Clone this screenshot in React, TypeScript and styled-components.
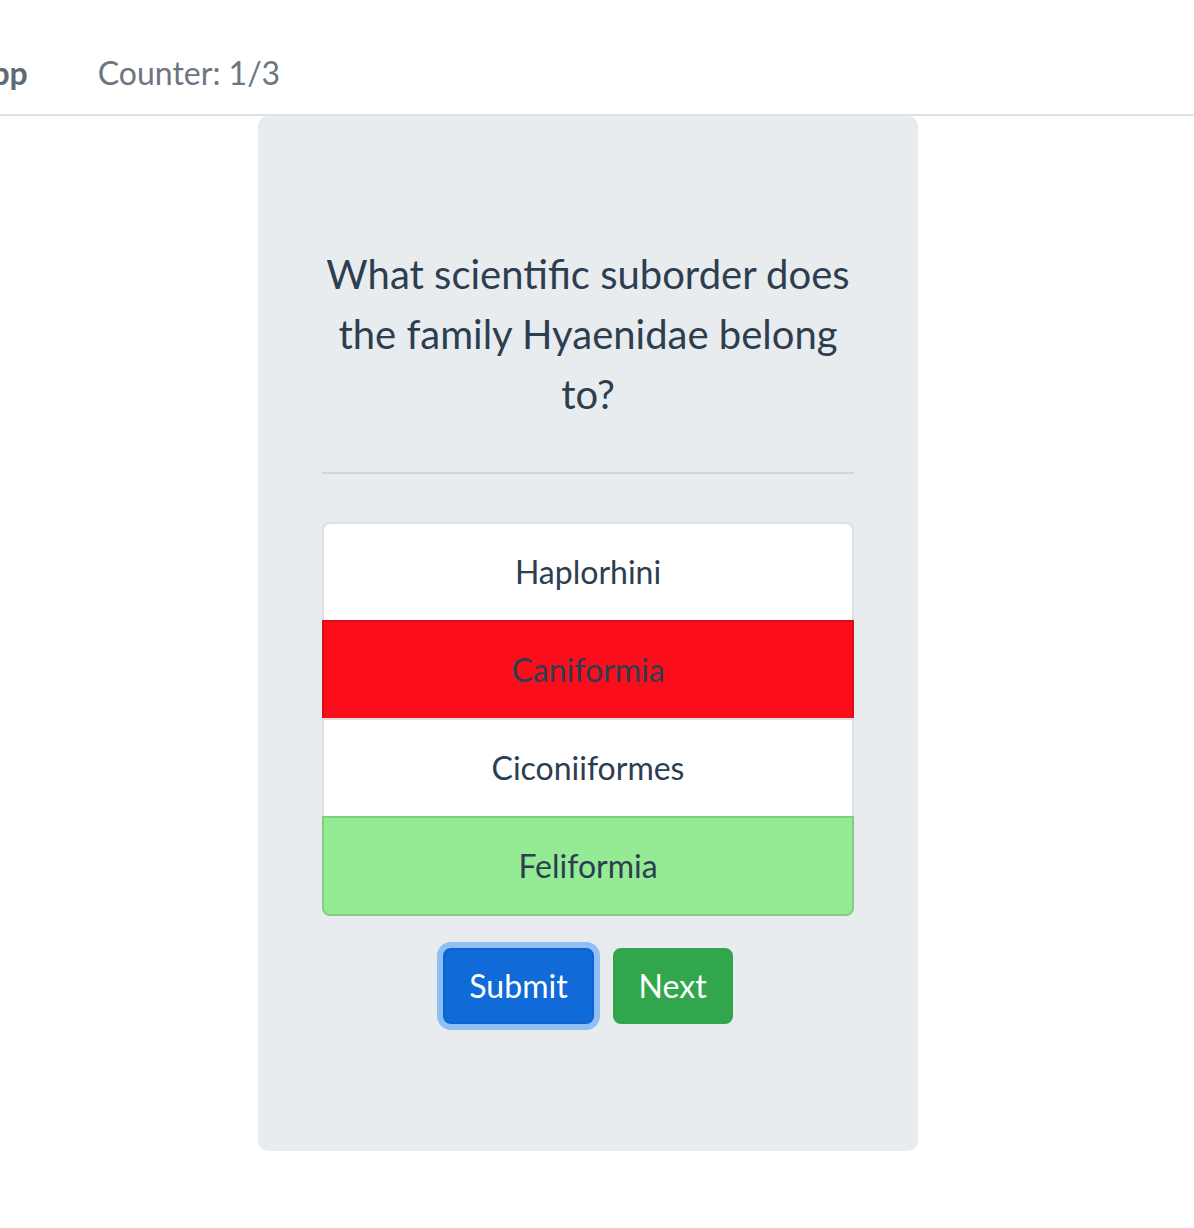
import React from "react";
import styled, { createGlobalStyle } from "styled-components";

const Global = createGlobalStyle`
  html, body { margin: 0; padding: 0; background: #fff; }
  body {
    font-family: Lato, "Open Sans", Helvetica, Arial, sans-serif;
    color: #2c3e50;
    overflow-x: hidden;
  }
  * { box-sizing: border-box; }
`;

const Navbar = styled.nav`
  display: flex;
  align-items: center;
  height: 116px;
  padding: 32px 32px 0;
  border-bottom: 2px solid #dfe2e5;
  overflow: hidden;
`;

const Brand = styled.span`
  font-size: 32px;
  line-height: 48px;
  font-weight: 700;
  color: #5f6a74;
  margin-left: -136px;
  margin-right: 70px;
  white-space: nowrap;
`;

const NavItem = styled.span`
  font-size: 32px;
  line-height: 48px;
  color: #6c7680;
  white-space: nowrap;
`;

const Card = styled.main`
  width: 660px;
  margin-left: 258px;
  padding: 128px 64px 127px;
  background: #e9ecef;
  border-radius: 10px;
  text-align: center;
`;

const Question = styled.p`
  margin: 0;
  font-size: 40px;
  line-height: 60px;
  font-weight: 400;
  color: #2c3e50;
`;

const Rule = styled.hr`
  margin: 48px 0;
  border: 0;
  border-top: 2px solid #d2d5d8;
`;

const List = styled.div`
  display: flex;
  flex-direction: column;
`;

const Item = styled.div<{ $tone?: "wrong" | "right" }>`
  font-size: 32px;
  line-height: 48px;
  padding: 24px 40px;
  margin-bottom: -2px;
  border: 2px solid rgba(0, 0, 0, 0.125);
  color: #2c3e50;
  background: ${(p) =>
    p.$tone === "wrong" ? "#fc0d1b" : p.$tone === "right" ? "#94eb94" : "#fff"};
  &:first-child {
    border-top-left-radius: 8px;
    border-top-right-radius: 8px;
  }
  &:last-child {
    margin-bottom: 0;
    border-bottom-left-radius: 8px;
    border-bottom-right-radius: 8px;
  }
`;

const Actions = styled.div`
  display: flex;
  justify-content: center;
  gap: 19px;
  margin-top: 32px;
`;

const Button = styled.button<{ $variant: "primary" | "success"; $focused?: boolean }>`
  font-family: inherit;
  font-size: 32px;
  line-height: 48px;
  padding: 12px 24px;
  border-radius: 8px;
  color: #fff;
  cursor: pointer;
  border: 2px solid
    ${(p) => (p.$variant === "primary" ? "#0e63cc" : "#32a64c")};
  background: ${(p) => (p.$variant === "primary" ? "#106bd8" : "#32a64c")};
  box-shadow: ${(p) => (p.$focused ? "0 0 0 6px #8ebff5" : "none")};
`;

const answers: { text: string; tone?: "wrong" | "right" }[] = [
  { text: "Haplorhini" },
  { text: "Caniformia", tone: "wrong" },
  { text: "Ciconiiformes" },
  { text: "Feliformia", tone: "right" },
];

export default function App() {
  return (
    <>
      <Global />
      <Navbar>
        <Brand>Quiz App</Brand>
        <NavItem>Counter: 1/3</NavItem>
      </Navbar>
      <Card>
        <Question>What scientific suborder does the family Hyaenidae belong to?</Question>
        <Rule />
        <List>
          {answers.map((a) => (
            <Item key={a.text} $tone={a.tone}>
              {a.text}
            </Item>
          ))}
        </List>
        <Actions>
          <Button $variant="primary" $focused>
            Submit
          </Button>
          <Button $variant="success">Next</Button>
        </Actions>
      </Card>
    </>
  );
}
